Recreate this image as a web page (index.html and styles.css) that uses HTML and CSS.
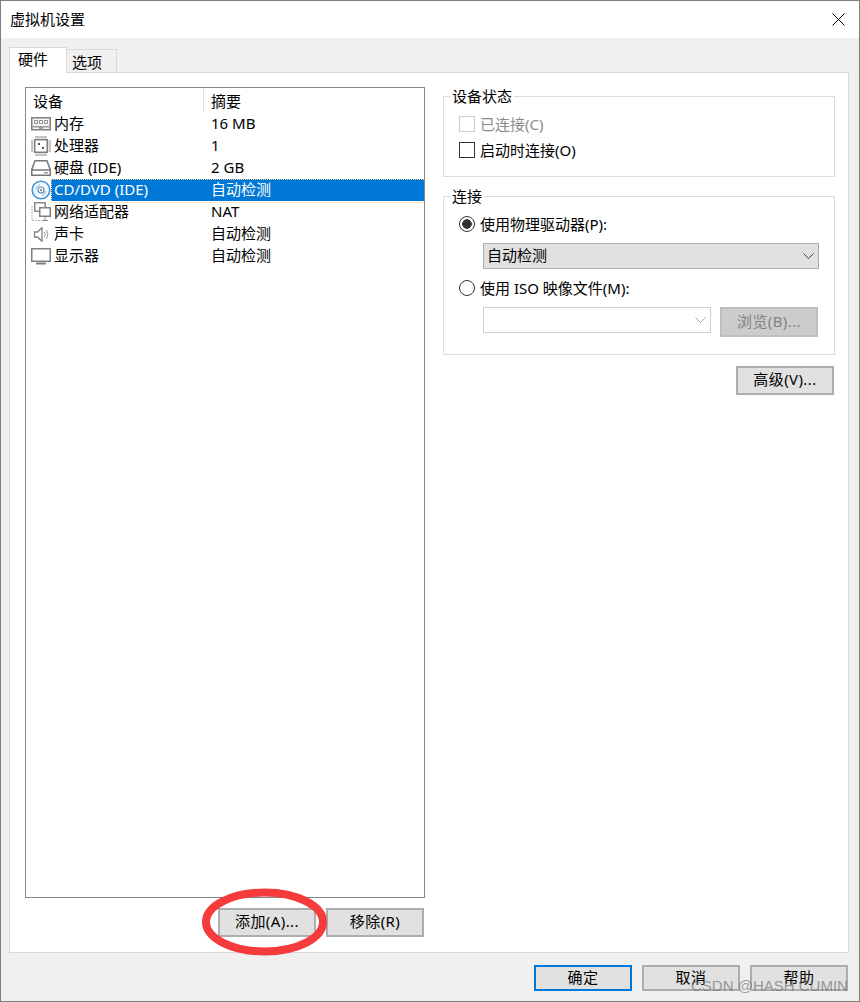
FILE: index.html
```html
<!DOCTYPE html>
<html lang="zh-CN">
<head>
<meta charset="utf-8">
<title>虚拟机设置</title>
<link rel="stylesheet" href="styles.css">
</head>
<body>
<div class="window">
  <header class="titlebar">
    <span class="title">虚拟机设置</span>
    <svg class="close" width="13" height="13" viewBox="0 0 13 13"><path d="M.5.5l12 12M12.5.5l-12 12" stroke="#000" stroke-width="1" fill="none"/></svg>
  </header>
  <div class="body">
    <div class="tabs">
      <div class="tab active">硬件</div>
      <div class="tab">选项</div>
    </div>
    <div class="panel">
      <div class="left">
        <div class="list">
          <div class="list-head"><span class="col-a">设备</span><span class="col-b">摘要</span></div>
          <div class="row">
            <span class="col-a"><svg class="ico" width="20" height="14" viewBox="0 0 20 14"><rect x=".75" y=".75" width="18.500" height="12" fill="#f4f4f4" stroke="#808080" stroke-width="1.500"/><path d="M3.500 3.500h3v3h-3zM8.500 3.500h3v3h-3zM13.500 3.500h3v3h-3z" fill="#fff" stroke="#8a8a8a"/><path d="M1.500 9h17v1.500H12v2H8v-2H1.500z" fill="#9a9a9a"/></svg><span class="lbl">内存</span></span><span class="col-b">16 MB</span>
          </div>
          <div class="row">
            <span class="col-a"><svg class="ico" width="20" height="20" viewBox="0 0 20 20"><rect x="3.750" y="3.750" width="12.500" height="12.500" fill="#fff" stroke="#808080" stroke-width="1.500"/><path d="M5 0v2.500M7 0v2.500M9 0v2.500M11 0v2.500M13 0v2.500M15 0v2.500M5 17.500V20M7 17.500V20M9 17.500V20M11 17.500V20M13 17.500V20M15 17.500V20M0 5h2.500M0 7h2.500M0 9h2.500M0 11h2.500M0 13h2.500M0 15h2.500M17.500 5H20M17.500 7H20M17.500 9H20M17.500 11H20M17.500 13H20M17.500 15H20" stroke="#8c8c8c" fill="none"/><path d="M7 7h2v2H7zM11 11h2v2h-2z" fill="#555"/></svg><span class="lbl">处理器</span></span><span class="col-b">1</span>
          </div>
          <div class="row">
            <span class="col-a"><svg class="ico" width="20" height="16" viewBox="0 0 20 16"><path d="M4 .75h12l3.250 9v5.500H.75v-5.500z" fill="#fff" stroke="#777" stroke-width="1.500"/><path d="M1 10h18" stroke="#777" stroke-width="1.500"/><path d="M13 12.800h4" stroke="#666"/></svg><span class="lbl">硬盘 (IDE)</span></span><span class="col-b">2 GB</span>
          </div>
          <div class="row selected">
            <span class="col-a"><svg class="ico" width="20" height="20" viewBox="0 0 20 20"><circle cx="10" cy="10" r="8.800" fill="#f2f8fd" stroke="#3f93d8" stroke-width="1.600"/><path d="M5 9a5 5 0 0 1 4-4M15 11a5 5 0 0 1-4 4" stroke="#7ab4e4" fill="none"/><circle cx="10" cy="10" r="3" fill="#fff" stroke="#5f86a8" stroke-width="1.200"/><circle cx="10" cy="10" r="1" fill="#4a6f8f"/></svg><span class="lbl">CD/DVD (IDE)</span></span><span class="col-b">自动检测</span>
          </div>
          <div class="row">
            <span class="col-a"><svg class="ico" width="20" height="20" viewBox="0 0 20 20"><rect x="3.750" y=".75" width="10.500" height="8.500" fill="#fff" stroke="#8a8a8a" stroke-width="1.500"/><rect x="8.750" y="5.750" width="10.500" height="8.500" fill="#fff" stroke="#808080" stroke-width="1.500"/><path d="M14 15v3M11 18.500h6" stroke="#888" fill="none"/><path d="M1 4v14.500h9" stroke="#999" stroke-dasharray="1.500 1.500" fill="none"/></svg><span class="lbl">网络适配器</span></span><span class="col-b">NAT</span>
          </div>
          <div class="row">
            <span class="col-a"><svg class="ico" width="20" height="15" viewBox="0 0 20 15"><path d="M3.500 5h3l4.500-4.250v13.500L6.500 10h-3z" fill="#fff" stroke="#808080" stroke-width="1.300"/><path d="M13.500 5q1.300 2.500 0 5M15.500 3q2.500 4.500 0 9" stroke="#999" fill="none"/></svg><span class="lbl">声卡</span></span><span class="col-b">自动检测</span>
          </div>
          <div class="row">
            <span class="col-a"><svg class="ico" width="20" height="17" viewBox="0 0 20 17"><rect x=".75" y=".75" width="18.500" height="12.500" fill="#fff" stroke="#808080" stroke-width="1.500"/><path d="M5 15.500h10" stroke="#808080" stroke-width="2"/></svg><span class="lbl">显示器</span></span><span class="col-b">自动检测</span>
          </div>
        </div>
        <div class="list-actions">
          <button class="btn">添加(A)...</button>
          <button class="btn">移除(R)</button>
        </div>
      </div>
      <div class="right">
        <fieldset class="group status">
          <legend>设备状态</legend>
          <div class="option disabled"><span class="check"></span>已连接(C)</div>
          <div class="option"><span class="check"></span>启动时连接(O)</div>
        </fieldset>
        <fieldset class="group connect">
          <legend>连接</legend>
          <div class="option"><span class="radio on"></span>使用物理驱动器(P):</div>
          <div class="select"><span class="select-text">自动检测</span><svg width="11" height="6" viewBox="0 0 11 6"><path d="M.5.5l5 5 5-5" stroke="#444" fill="none"/></svg></div>
          <div class="option"><span class="radio"></span>使用 ISO 映像文件(M):</div>
          <div class="iso">
            <div class="select blank"><svg width="11" height="6" viewBox="0 0 11 6"><path d="M.5.5l5 5 5-5" stroke="#aaa" fill="none"/></svg></div>
            <button class="btn browse">浏览(B)...</button>
          </div>
        </fieldset>
        <div class="advanced"><button class="btn">高级(V)...</button></div>
      </div>
    </div>
    <div class="footer">
      <button class="btn primary">确定</button>
      <button class="btn">取消</button>
      <button class="btn">帮助</button>
    </div>
  </div>
  <svg class="ring" width="130" height="70" viewBox="0 0 130 70"><ellipse cx="63.500" cy="35" rx="58.500" ry="29.500" fill="none" stroke="#f53b3b" stroke-width="8"/></svg>
  <span class="watermark">CSDN @HASH CUMIN</span>
</div>
</body>
</html>
```
FILE: styles.css
```css
* { box-sizing: border-box; }
html, body { margin: 0; padding: 0; background: #fff; }
body { font-family: "Noto Sans", "Noto Sans CJK SC", sans-serif; font-size: 15px; color: #000; }
.window { position: relative; width: 860px; height: 1002px; border: 1px solid #7f7f7f; display: flex; flex-direction: column; overflow: hidden; }
.titlebar { height: 37px; flex: none; background: #fff; display: flex; align-items: center; justify-content: space-between; padding: 0 14px 0 9px; }
.title { line-height: 37px; }
.close { display: block; }
.body { flex: 1; background: #f0f0f0; padding: 9px 10px 0 8px; display: flex; flex-direction: column; min-height: 0; }
.tabs { display: flex; align-items: flex-end; height: 26px; flex: none; position: relative; z-index: 1; margin-bottom: -1px; }
.tab { width: 51px; height: 24px; background: #f0f0f0; border: 1px solid #d9d9d9; padding-left: 5px; line-height: 24px; }
.tab.active { width: 58px; height: 26px; background: #fff; border-bottom-color: #fff; line-height: 22px; padding-left: 8px; }
.tab + .tab { margin-left: -1px; }
.panel { height: 881px; flex: none; background: #fff; border: 1px solid #d9d9d9; padding: 14px 14px 0 15px; display: flex; gap: 18px; }
.left { width: 400px; flex: none; display: flex; flex-direction: column; }
.list { height: 811px; flex: none; border: 1px solid #828790; background: #fff; overflow: hidden; }
.list-head { height: 25px; display: flex; align-items: flex-start; }
.list-head .col-a { width: 178px; padding-left: 7px; height: 24px; line-height: 26px; border-right: 1px solid #e0e0e0; }
.list-head .col-b { padding-left: 7px; line-height: 26px; }
.row { position: relative; height: 22px; display: flex; align-items: center; white-space: nowrap; }
.row .col-a { width: 185px; display: flex; align-items: center; height: 22px; padding-left: 5px; flex: none; }
.row .col-b { flex: 1; height: 22px; line-height: 21px; }
.lbl { line-height: 21px; margin-top: -1px; }
.ico { flex: none; width: 20px; margin-right: 3px; }
.row.selected { color: #fff; background: linear-gradient(#0078d7, #0078d7) no-repeat 25px 0 / 373px 100%; }
.row.selected::after { content: ""; position: absolute; left: 25px; top: 0; width: 373px; height: 22px; border: 1px dotted #ffcf8f; }
.list-actions { display: flex; justify-content: flex-end; gap: 10px; margin-top: 10px; padding-right: 1px; }
.btn { width: 98px; height: 29px; padding: 0 0 2px; background: #e1e1e1; border: 2px solid #adadad; font: inherit; line-height: 1; color: #000; letter-spacing: .4px; }
.right { width: 392px; flex: none; }
.group { margin: 0; border: 1px solid #dcdcdc; padding: 0; min-width: 0; }
.group legend { padding: 0 2px; margin-left: -9px; line-height: 18px; }
.status { height: 90px; padding: 6px 15px 0; }
.connect { height: 168px; margin-top: 10px; padding: 6px 15px 0; }
.option { display: flex; align-items: center; height: 26px; padding-bottom: 2px; white-space: nowrap; }
.option.disabled { color: #8b8b8b; }
.check { width: 16px; height: 16px; margin-top: 2px; border: 1px solid #333; background: #fff; margin-right: 5px; flex: none; }
.disabled .check { border-color: #ccc; }
.radio { width: 16px; height: 16px; margin-top: 2px; border: 1px solid #333; border-radius: 50%; margin-right: 5px; background: #fff; flex: none; }
.radio.on { background: radial-gradient(circle, #333 0 4.500px, #fff 5px); }
.select { margin: 6px 0 6px 24px; width: 336px; height: 26px; background: #e1e1e1; border: 1px solid #adadad; display: flex; align-items: center; justify-content: space-between; padding: 0 4px 0 3px; }
.select-text { line-height: 20px; margin-top: -2px; }
.select.blank { margin: 0; width: 228px; background: #fff; border-color: #cfcfcf; justify-content: flex-end; }
.iso { display: flex; align-items: flex-start; gap: 9px; margin: 6px 0 0 24px; width: 336px; }
.btn.browse { width: 98px; height: 30px; background: #cccccc; border-color: #bfbfbf; color: #838383; }
.advanced { display: flex; justify-content: flex-end; margin-top: 11px; padding-right: 1px; }
.footer { display: flex; justify-content: flex-end; gap: 10px; padding-top: 12px; padding-right: 1px; }
.footer .btn { height: 26px; }
.btn.primary { border-color: #0078d7; }
.ring { position: absolute; left: 200px; top: 886px; pointer-events: none; }
.watermark { position: absolute; left: 690px; top: 976px; font-family: "Liberation Sans", sans-serif; font-size: 15px; line-height: 18px; color: rgba(105,105,105,.65); white-space: nowrap; }
```
